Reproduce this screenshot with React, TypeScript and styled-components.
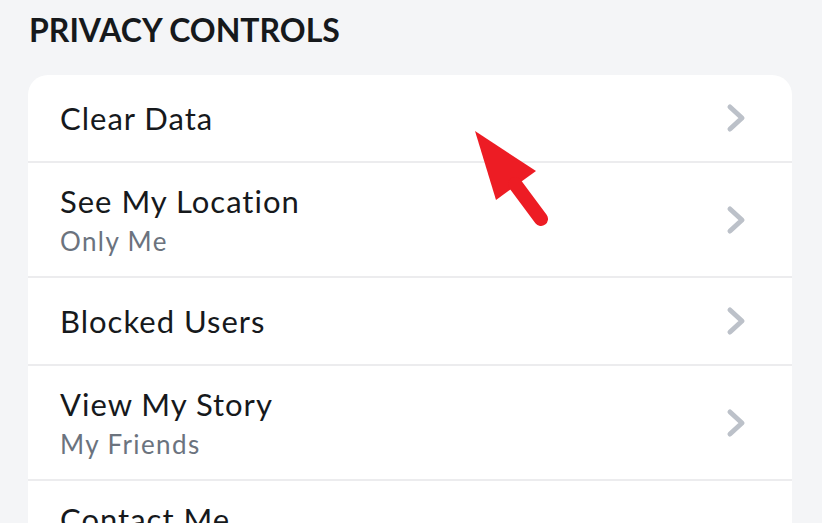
import React from "react";
import styled, { createGlobalStyle } from "styled-components";

const GlobalStyle = createGlobalStyle`
  html, body {
    margin: 0;
    padding: 0;
    background: #f4f5f7;
    font-family: Lato, "Noto Sans", "Liberation Sans", sans-serif;
    overflow: hidden;
  }
`;

/* ─ layout ─ */
const Page = styled.div`
  position: relative;
  width: 822px;
  height: 523px;
  padding: 12px 30px 0 28px;
  box-sizing: border-box;
  overflow: hidden;
`;

const Heading = styled.h2`
  margin: 0 0 0 1px;
  font-size: 32px;
  line-height: 36px;
  font-weight: 700;
  color: #16191c;
  letter-spacing: 0;
`;

const Card = styled.div`
  margin-top: 27px;
  background: #ffffff;
  border-radius: 20px;
  overflow: hidden;
`;

const Row = styled.div<{ $double?: boolean }>`
  display: flex;
  align-items: center;
  justify-content: space-between;
  height: ${(p) => (p.$double ? "115px" : "88px")};
  padding: 0 44px 0 32px;
  border-bottom: 2px solid #ececee;
  box-sizing: border-box;
`;

const Texts = styled.div`
  display: flex;
  flex-direction: column;
`;

const Title = styled.span`
  font-size: 31px;
  line-height: 36px;
  letter-spacing: 1px;
  color: #16191c;
`;

const Sub = styled.span`
  margin-top: 7px;
  font-size: 26px;
  line-height: 30px;
  letter-spacing: 1.4px;
  color: #6b737e;
`;

const Pointer = styled.svg`
  position: absolute;
  left: 465px;
  top: 120px;
`;

const Chevron = () => (
  <svg width="22" height="30" viewBox="0 0 22 30">
    <path
      d="M4 4 L16 15 L4 26"
      fill="none"
      stroke="#bcc1c9"
      strokeWidth="5"
      strokeLinecap="round"
      strokeLinejoin="round"
    />
  </svg>
);

const items: { title: string; sub?: string }[] = [
  { title: "Clear Data" },
  { title: "See My Location", sub: "Only Me" },
  { title: "Blocked Users" },
  { title: "View My Story", sub: "My Friends" },
  { title: "Contact Me", sub: "My Friends" },
];

export default function App() {
  return (
    <>
      <GlobalStyle />
      <Page>
        <Heading>PRIVACY CONTROLS</Heading>
        <Card>
          {items.map((it) => (
            <Row key={it.title} $double={!!it.sub}>
              <Texts>
                <Title>{it.title}</Title>
                {it.sub && <Sub>{it.sub}</Sub>}
              </Texts>
              <Chevron />
            </Row>
          ))}
        </Card>
        <Pointer width="90" height="115" viewBox="0 0 90 115">
          <polygon points="10,11 31,80 71,51" fill="#ed1c24" />
          <line
            x1="50"
            y1="64"
            x2="76"
            y2="99"
            stroke="#ed1c24"
            strokeWidth="14"
            strokeLinecap="round"
          />
        </Pointer>
      </Page>
    </>
  );
}
